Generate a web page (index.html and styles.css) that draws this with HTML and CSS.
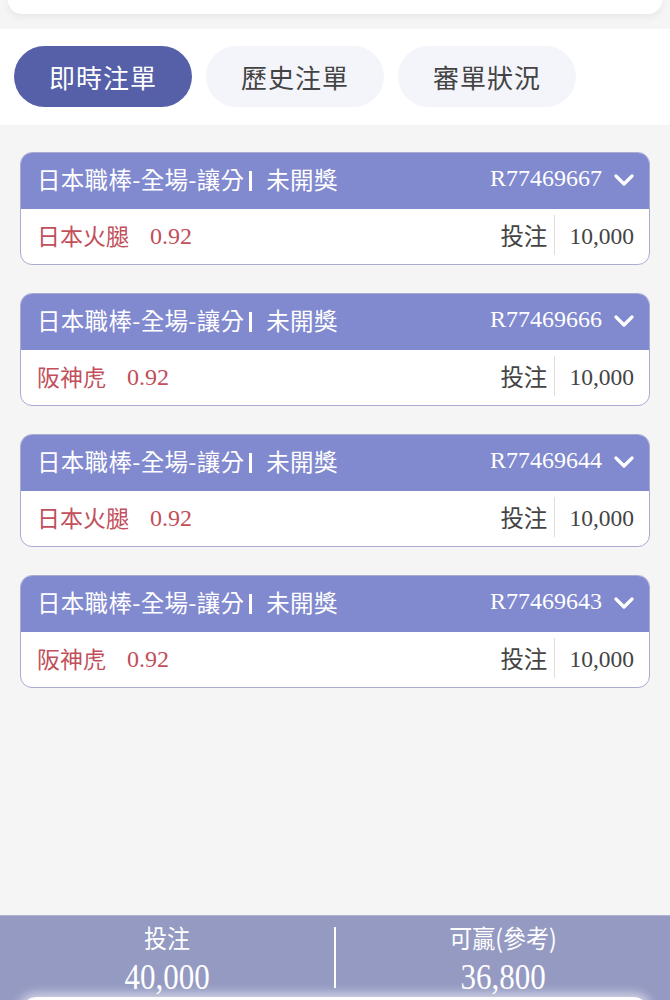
FILE: index.html
```html
<!DOCTYPE html>
<html lang="zh-Hant">
<head>
    <meta charset="UTF-8">
    <title>注單</title>
    <link rel="stylesheet" href="styles.css">
</head>
<body>
<div class="page">
    <div class="top-card"></div>

    <div class="tabs">
        <div class="tab tab-active">即時注單</div>
        <div class="tab">歷史注單</div>
        <div class="tab">審單狀況</div>
    </div>

    <div class="list">
        <div class="bet">
            <div class="bet-head">
                <span class="bet-title">日本職棒-全場-讓分<span class="bar"></span>未開獎</span>
                <span class="bet-no">R77469667</span>
                <svg class="chevron" width="20" height="14" viewBox="0 0 20 14"><path d="M2 3 L10 11 L18 3" fill="none" stroke="#fff" stroke-width="3.2" stroke-linecap="round" stroke-linejoin="round"/></svg>
            </div>
            <div class="bet-body">
                <span class="team">日本火腿</span><span class="odds">0.92</span>
                <span class="stake-label">投注</span><span class="stake">10,000</span>
            </div>
        </div>
        <div class="bet">
            <div class="bet-head">
                <span class="bet-title">日本職棒-全場-讓分<span class="bar"></span>未開獎</span>
                <span class="bet-no">R77469666</span>
                <svg class="chevron" width="20" height="14" viewBox="0 0 20 14"><path d="M2 3 L10 11 L18 3" fill="none" stroke="#fff" stroke-width="3.2" stroke-linecap="round" stroke-linejoin="round"/></svg>
            </div>
            <div class="bet-body">
                <span class="team">阪神虎</span><span class="odds">0.92</span>
                <span class="stake-label">投注</span><span class="stake">10,000</span>
            </div>
        </div>
        <div class="bet">
            <div class="bet-head">
                <span class="bet-title">日本職棒-全場-讓分<span class="bar"></span>未開獎</span>
                <span class="bet-no">R77469644</span>
                <svg class="chevron" width="20" height="14" viewBox="0 0 20 14"><path d="M2 3 L10 11 L18 3" fill="none" stroke="#fff" stroke-width="3.2" stroke-linecap="round" stroke-linejoin="round"/></svg>
            </div>
            <div class="bet-body">
                <span class="team">日本火腿</span><span class="odds">0.92</span>
                <span class="stake-label">投注</span><span class="stake">10,000</span>
            </div>
        </div>
        <div class="bet">
            <div class="bet-head">
                <span class="bet-title">日本職棒-全場-讓分<span class="bar"></span>未開獎</span>
                <span class="bet-no">R77469643</span>
                <svg class="chevron" width="20" height="14" viewBox="0 0 20 14"><path d="M2 3 L10 11 L18 3" fill="none" stroke="#fff" stroke-width="3.2" stroke-linecap="round" stroke-linejoin="round"/></svg>
            </div>
            <div class="bet-body">
                <span class="team">阪神虎</span><span class="odds">0.92</span>
                <span class="stake-label">投注</span><span class="stake">10,000</span>
            </div>
        </div>
    </div>

    <div class="summary">
        <div class="summary-col">
            <div class="summary-label">投注</div>
            <div class="summary-value">40,000</div>
        </div>
        <div class="summary-divider"></div>
        <div class="summary-col">
            <div class="summary-label">可贏(參考)</div>
            <div class="summary-value">36,800</div>
        </div>
    </div>
    <div class="home-bar"></div>
</div>
</body>
</html>
```

FILE: styles.css
```css
* {
    box-sizing: border-box;
}

html, body {
    margin: 0;
    height: 100%;
}

body {
    background-color: #f5f5f5;
    font-family: "Noto Sans CJK TC", "Noto Sans", sans-serif;
    overflow: hidden;
}

.page {
    height: 1000px;
    display: flex;
    flex-direction: column;
    position: relative;
    overflow: hidden;
}

.top-card {
    height: 14px;
    margin: 0 8px;
    background-color: #fff;
    border-radius: 0 0 22px 22px;
    box-shadow: 0 2px 8px rgba(0, 0, 0, 0.07);
    flex-shrink: 0;
}

.tabs {
    margin-top: 15px;
    background-color: #fff;
    padding: 17px 14px 18px;
    display: flex;
    gap: 14px;
    flex-shrink: 0;
}

.tab {
    width: 178px;
    height: 61px;
    border-radius: 31px;
    background-color: #f4f5fa;
    color: #444;
    font-size: 26px;
    display: flex;
    align-items: center;
    justify-content: center;
    letter-spacing: 1px;
}

.tab-active {
    background-color: #5560a8;
    color: #fff;
}

.list {
    flex: 1;
    padding: 27px 20px 0;
    display: flex;
    flex-direction: column;
    gap: 28px;
}

.bet {
    border: 1.5px solid #a9abd2;
    border-radius: 12px;
    overflow: hidden;
    background-color: #fff;
}

.bet-head {
    height: 56px;
    background-color: #8189cf;
    color: #fff;
    display: flex;
    align-items: center;
    padding: 0 15px 0 16px;
}

.bet-title {
    font-size: 23.5px;
    flex: 1;
    display: flex;
    align-items: center;
    margin-top: -5px;
    letter-spacing: 0.3px;
}

.bar {
    display: inline-block;
    width: 3px;
    height: 20px;
    background-color: #fff;
    margin: 4px 14px 0 5px;
}

.bet-no {
    font-family: "Liberation Serif", serif;
    font-size: 24px;
    margin-top: -5px;
}

.chevron {
    margin-left: 12px;
    margin-top: -3px;
}

.bet-body {
    height: 55px;
    display: flex;
    align-items: center;
    padding: 0 15px 0 16px;
}

.team {
    color: #c24f5b;
    font-size: 23px;
    margin-top: -3px;
}

.odds {
    color: #c24f5b;
    font-family: "Liberation Serif", serif;
    font-size: 24px;
    margin-left: 21px;
    flex: 1;
}

.stake-label {
    color: #444;
    font-size: 23.5px;
    padding-right: 7px;
    border-right: 1px solid #ddd;
    line-height: 40px;
    margin-top: -3px;
}

.stake {
    color: #444;
    font-family: "Liberation Serif", serif;
    font-size: 23.5px;
    margin-left: 14px;
}

.summary {
    height: 82px;
    background-color: #959ac2;
    border-top: 1px solid #aeb1d2;
    color: #fff;
    display: flex;
    flex-shrink: 0;
}

.summary-col {
    flex: 1;
    text-align: center;
    padding-top: 4px;
}

.summary-label {
    font-size: 23px;
    line-height: 34px;
    transform: scaleY(1.1);
}

.summary-value {
    font-family: "Liberation Serif", serif;
    font-size: 31px;
    line-height: 40px;
    margin-top: 3px;
    transform: scaleY(1.15);
}

.summary-divider {
    width: 2px;
    height: 61px;
    margin-top: 11px;
    background-color: #fff;
}

.home-bar {
    height: 3px;
    background-color: #959ac2;
    flex-shrink: 0;
    position: relative;
}

.home-bar::after {
    content: "";
    position: absolute;
    left: 22px;
    right: 22px;
    top: 0;
    height: 20px;
    background-color: #fff;
    border-radius: 14px 14px 0 0;
    box-shadow: 0 0 10px 4px rgba(255, 255, 255, 0.55);
}
```
